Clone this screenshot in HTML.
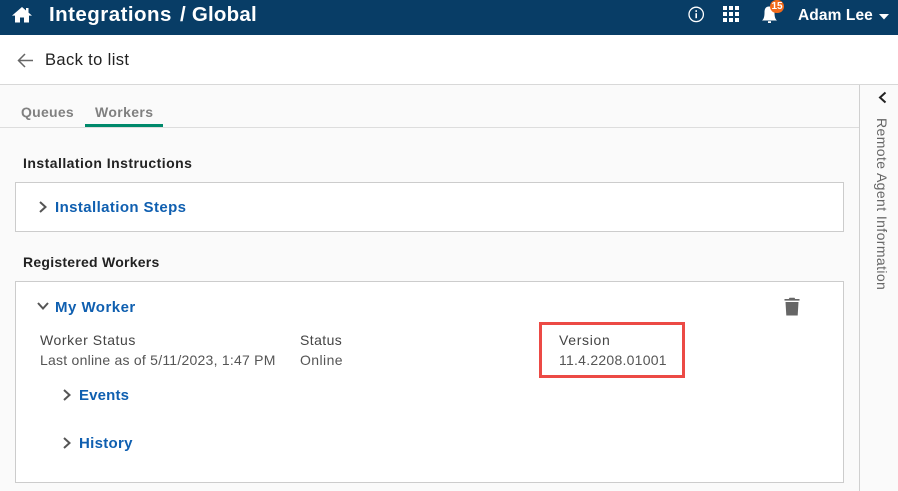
<!DOCTYPE html>
<html><head><meta charset="utf-8"><style>
html,body{margin:0;padding:0}
body{width:898px;height:491px;overflow:hidden;background:#fafafa;position:relative;font-family:"Liberation Sans",sans-serif;color:#444}
.a{position:absolute;white-space:nowrap}
.t{position:absolute;white-space:nowrap;line-height:20px}
.b{font-weight:bold}
.blue{color:#0f5fb0;font-weight:bold;font-size:15px;letter-spacing:.4px}
.box{position:absolute;background:#fff;border:1px solid #ccc;box-sizing:border-box}
svg{position:absolute;overflow:visible}
</style></head><body>
<div class="a" style="left:0;top:0;width:898px;height:35px;background:#083d66"></div>
<svg style="left:12px;top:6px" width="20" height="17" viewBox="0 0 20 17"><path d="M10 1L0 9.6H3V16.5H8V11.5H12V16.5H17V9.6H20L16.5 6.6V2H14V4.5Z" fill="#fff"/></svg>
<div class="t b" style="left:49px;top:5px;font-size:20.5px;color:#fff;letter-spacing:.46px">Integrations</div>
<div class="t b" style="left:180px;top:5px;font-size:20.5px;color:#fff;letter-spacing:.22px">/ Global</div>
<svg style="left:688px;top:6px" width="17" height="17" viewBox="0 0 17 17"><circle cx="8.2" cy="8.4" r="7.2" fill="none" stroke="#fff" stroke-width="1.3"/><rect x="7.4" y="7.2" width="1.6" height="5" fill="#fff"/><rect x="7.4" y="4.2" width="1.6" height="1.7" fill="#fff"/></svg>
<svg style="left:723px;top:6px" width="17" height="17" viewBox="0 0 17 17" fill="#fff"><rect width="4" height="4"/><rect x="6" width="4" height="4"/><rect x="12" width="4" height="4"/><rect y="6" width="4" height="4"/><rect x="6" y="6" width="4" height="4"/><rect x="12" y="6" width="4" height="4"/><rect y="12" width="4" height="4"/><rect x="6" y="12" width="4" height="4"/><rect x="12" y="12" width="4" height="4"/></svg>
<svg style="left:761px;top:5px" width="16" height="19" viewBox="0 0 16 19"><path d="M8 1.5C4.5 1.5 3.5 4 3.5 7.5C3.5 11 3 14 1 15.5H16C14 14 13.5 11 13.5 7.5C13.5 4 11.5 1.5 8 1.5Z" fill="#fff"/><rect x="7" y="16.2" width="3" height="1.8" fill="#fff"/></svg>
<div class="a" style="left:770px;top:0;width:14px;height:13px;border-radius:7px;background:#f26a1b;color:#fff;font-size:10px;font-weight:bold;line-height:13px;text-align:center">15</div>
<div class="t b" style="left:798px;top:6px;font-size:15.5px;color:#fff;letter-spacing:.1px">Adam Lee</div>
<svg style="left:879px;top:14px" width="10" height="6"><path d="M0 0H10L5 5.5Z" fill="#fff"/></svg>

<div class="a" style="left:0;top:35px;width:898px;height:50px;background:#fff;border-bottom:1px solid #d8d8d8;box-sizing:border-box"></div>
<svg style="left:17px;top:53px" width="17" height="15" viewBox="0 0 17 15"><path d="M16 7.5H1.5M8 1L1.5 7.5L8 14" fill="none" stroke="#666" stroke-width="1.5"/></svg>
<div class="t" style="left:45px;top:50px;font-size:16.5px;color:#222;letter-spacing:.38px">Back to list</div>

<div class="a" style="left:0;top:127px;width:859px;height:1px;background:#ddd"></div>
<div class="t b" style="left:21px;top:102px;font-size:14px;color:#808080;letter-spacing:.27px">Queues</div>
<div class="t b" style="left:95px;top:102px;font-size:14px;color:#808080;letter-spacing:.38px">Workers</div>
<div class="a" style="left:85px;top:124px;width:78px;height:3px;background:#00896b"></div>

<div class="a" style="left:859px;top:85px;width:1px;height:406px;background:#d0d0d0"></div>
<svg style="left:878px;top:91px" width="9" height="13" viewBox="0 0 9 13"><path d="M7.5 1.5L2 6.5L7.5 11.5" fill="none" stroke="#222" stroke-width="2"/></svg>
<div class="a" style="left:873px;top:118px;font-size:14px;line-height:18px;color:#666;writing-mode:vertical-rl;letter-spacing:.4px">Remote Agent Information</div>

<div class="t b" style="left:23px;top:153px;font-size:14px;color:#222;letter-spacing:.46px">Installation Instructions</div>
<div class="box" style="left:15px;top:182px;width:829px;height:50px"></div>
<svg style="left:39px;top:201px" width="8" height="12" viewBox="0 0 8 12"><path d="M1 1L6.5 6L1 11" fill="none" stroke="#555" stroke-width="2"/></svg>
<div class="t blue" style="left:55px;top:198px">Installation Steps</div>

<div class="t b" style="left:23px;top:252px;font-size:14px;color:#222;letter-spacing:.25px">Registered Workers</div>
<div class="box" style="left:15px;top:281px;width:829px;height:202px"></div>
<svg style="left:37px;top:302px" width="12" height="8" viewBox="0 0 12 8"><path d="M1 1L6 6.5L11 1" fill="none" stroke="#555" stroke-width="2"/></svg>
<div class="t blue" style="left:55px;top:298px;letter-spacing:.48px">My Worker</div>
<svg style="left:784px;top:297px" width="16" height="19" viewBox="0 0 16 19"><path d="M5.5 0.8H10.5L11.2 2H15.5V3.6H0.5V2H4.8Z M1.5 5H14.5L13.7 18.5H2.3Z" fill="#666"/></svg>

<div class="t" style="left:40px;top:330px;font-size:14px;color:#444;letter-spacing:.58px">Worker Status</div>
<div class="t" style="left:40px;top:350px;font-size:14px;color:#555;letter-spacing:.24px">Last online as of 5/11/2023, 1:47 PM</div>
<div class="t" style="left:300px;top:330px;font-size:14px;color:#444;letter-spacing:.42px">Status</div>
<div class="t" style="left:300px;top:350px;font-size:14px;color:#555;letter-spacing:.42px">Online</div>
<div class="t" style="left:559px;top:330px;font-size:14px;color:#444;letter-spacing:.68px">Version</div>
<div class="t" style="left:559px;top:350px;font-size:14px;color:#555;letter-spacing:.25px">11.4.2208.01001</div>
<div class="a" style="left:539px;top:322px;width:146px;height:56px;border:3px solid #ec4a45;box-sizing:border-box"></div>

<svg style="left:63px;top:389px" width="8" height="12" viewBox="0 0 8 12"><path d="M1 1L6.5 6L1 11" fill="none" stroke="#555" stroke-width="2"/></svg>
<div class="t blue" style="left:79px;top:386px;letter-spacing:.15px">Events</div>
<svg style="left:63px;top:437px" width="8" height="12" viewBox="0 0 8 12"><path d="M1 1L6.5 6L1 11" fill="none" stroke="#555" stroke-width="2"/></svg>
<div class="t blue" style="left:79px;top:434px;letter-spacing:.3px">History</div>
</body></html>
